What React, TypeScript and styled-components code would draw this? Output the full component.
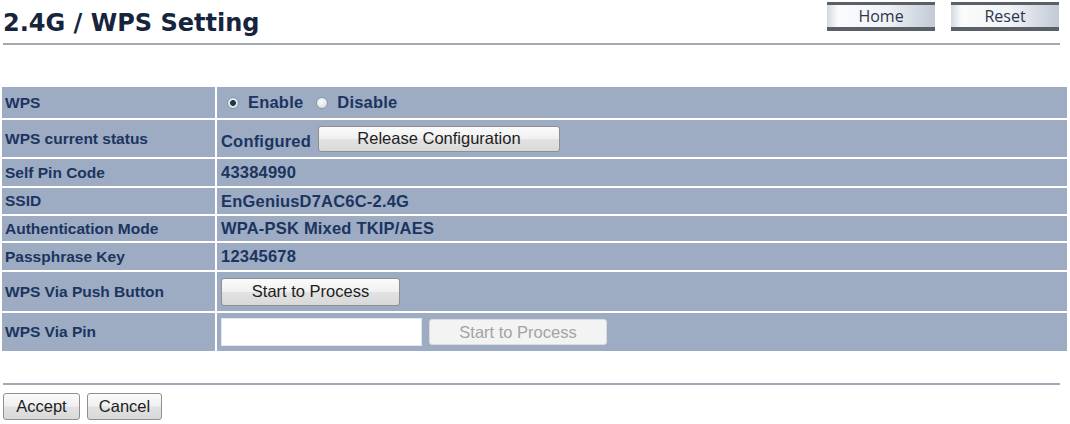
import { Fragment } from 'react';
import styled, { createGlobalStyle } from 'styled-components';

const GlobalStyle = createGlobalStyle`
  html, body {
    margin: 0;
    padding: 0;
    background: #ffffff;
  }
  body {
    font-family: "Liberation Sans", Arial, sans-serif;
  }
`;

const Page = styled.div`
  width: 1070px;
  height: 424px;
  box-sizing: border-box;
  overflow: hidden;
`;

const Header = styled.div`
  display: flex;
  justify-content: space-between;
  align-items: flex-start;
  height: 45px;
  box-sizing: border-box;
  margin: 0 10px 0 3px;
  border-bottom: 2px solid #a3a9b0;
`;

const Title = styled.h1`
  margin: 0;
  padding-top: 9px;
  font-family: "DejaVu Sans", Verdana, sans-serif;
  font-weight: bold;
  font-size: 24px;
  line-height: 28px;
  color: #17243d;
`;

const NavGroup = styled.div`
  display: flex;
  gap: 16px;
  margin-top: 2px;
  margin-right: 1px;
`;

const NavButton = styled.button`
  width: 108px;
  height: 29px;
  box-sizing: border-box;
  padding: 0;
  border: none;
  border-top: 3px solid #5b5f67;
  border-bottom: 4px solid #5b5f67;
  background: linear-gradient(to right, #d3d9e1 0%, #fbfbfc 10%, #f1f3f6 55%, #c2cad6 100%);
  font-family: "Open Sans", "DejaVu Sans", sans-serif;
  font-size: 16px;
  line-height: 20px;
  color: #2a374c;
  cursor: pointer;
`;

const Settings = styled.div`
  display: grid;
  grid-template-columns: 213px 850px;
  column-gap: 2px;
  row-gap: 2px;
  margin: 42px 0 0 2px;
`;

const LabelCell = styled.div<{ $h: number }>`
  height: ${p => p.$h}px;
  display: flex;
  align-items: center;
  padding-left: 3px;
  background: #9dabc3;
  color: #1b3560;
  font-weight: bold;
  font-size: 15.5px;
`;

const ValueCell = styled.div<{ $h: number }>`
  height: ${p => p.$h}px;
  display: flex;
  align-items: center;
  gap: 7px;
  padding-left: 4px;
  background: #9dabc3;
  color: #1b3560;
  font-weight: bold;
  font-size: 16.5px;
  letter-spacing: 0.2px;
`;

const RadioLabel = styled.label`
  display: inline-flex;
  align-items: center;
  gap: 9px;
  margin-left: 6px;
`;

const Radio = styled.input`
  appearance: none;
  margin: 0;
  width: 12px;
  height: 12px;
  border-radius: 50%;
  border: 1px solid #8a95a3;
  background: radial-gradient(circle at 40% 35%, #fbfcfd 0%, #dde2e8 70%, #c4ccd5 100%);
  &:checked {
    background: radial-gradient(circle, #1d3b50 0, #1d3b50 2.6px, #e9edf1 3.3px, #cdd4dc 100%);
  }
`;

const LowText = styled.span`
  margin-top: 6px;
`;

const Button = styled.button<{ $w: number; $h: number }>`
  width: ${p => p.$w}px;
  height: ${p => p.$h}px;
  box-sizing: border-box;
  padding: 0;
  border: 1px solid #8d8f91;
  border-radius: 3px;
  background: linear-gradient(to bottom, #fbfbfb 0%, #f0f0f0 48%, #e2e2e2 52%, #d9d9d9 100%);
  font-family: "Liberation Sans", Arial, sans-serif;
  font-size: 16.5px;
  color: #1e1e1e;
  cursor: pointer;
  &:disabled {
    border-color: #d9dbdd;
    background: #f3f3f3;
    color: #a3a3a3;
    cursor: default;
  }
`;

const PinInput = styled.input`
  width: 201px;
  height: 28px;
  box-sizing: border-box;
  margin: 0;
  border: 1px solid #e3e7ec;
  background: #ffffff;
  font-size: 15px;
`;

const Footer = styled.div`
  margin: 32px 10px 0 3px;
  padding-top: 8px;
  border-top: 2px solid #a0aab6;
  display: flex;
  gap: 7px;
`;

const rows: { label: string; h: number; value: React.ReactNode }[] = [
  {
    label: 'WPS',
    h: 31,
    value: (
      <>
        <RadioLabel>
          <Radio type="radio" name="wps" defaultChecked />
          Enable
        </RadioLabel>
        <RadioLabel>
          <Radio type="radio" name="wps" />
          Disable
        </RadioLabel>
      </>
    ),
  },
  {
    label: 'WPS current status',
    h: 37,
    value: (
      <>
        <LowText>Configured</LowText>
        <Button type="button" $w={242} $h={26}>Release Configuration</Button>
      </>
    ),
  },
  { label: 'Self Pin Code', h: 27, value: '43384990' },
  { label: 'SSID', h: 26, value: 'EnGeniusD7AC6C-2.4G' },
  { label: 'Authentication Mode', h: 25, value: 'WPA-PSK Mixed TKIP/AES' },
  { label: 'Passphrase Key', h: 27, value: '12345678' },
  {
    label: 'WPS Via Push Button',
    h: 39,
    value: <Button type="button" $w={179} $h={28}>Start to Process</Button>,
  },
  {
    label: 'WPS Via Pin',
    h: 38,
    value: (
      <>
        <PinInput type="text" />
        <Button type="button" $w={178} $h={26} disabled>Start to Process</Button>
      </>
    ),
  },
];

export default function App() {
  return (
    <Page>
      <GlobalStyle />
      <Header>
        <Title>2.4G / WPS Setting</Title>
        <NavGroup>
          <NavButton type="button">Home</NavButton>
          <NavButton type="button">Reset</NavButton>
        </NavGroup>
      </Header>

      <Settings>
        {rows.map(r => (
          <Fragment key={r.label}>
            <LabelCell $h={r.h}>{r.label}</LabelCell>
            <ValueCell $h={r.h}>{r.value}</ValueCell>
          </Fragment>
        ))}
      </Settings>

      <Footer>
        <Button type="button" $w={77} $h={27}>Accept</Button>
        <Button type="button" $w={75} $h={27}>Cancel</Button>
      </Footer>
    </Page>
  );
}
